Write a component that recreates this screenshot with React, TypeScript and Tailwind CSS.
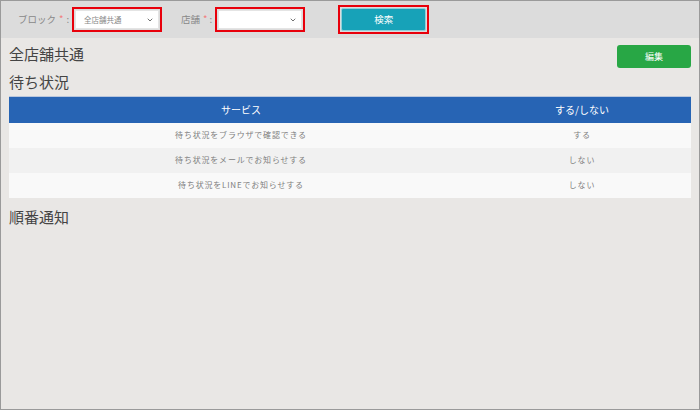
import { ChevronDown } from "lucide-react";

type Row = {
  service: string;
  value: string;
};

const rows: Row[] = [
  { service: "待ち状況をブラウザで確認できる", value: "する" },
  { service: "待ち状況をメールでお知らせする", value: "しない" },
  { service: "待ち状況をLINEでお知らせする", value: "しない" },
];

const font = { fontFamily: '"Noto Sans CJK JP", "Noto Sans", sans-serif' };

function FakeSelect({ text }: { text?: string }) {
  return (
    <div className="border-2 border-[#e8000b] p-px w-[90px] h-[25px] flex shrink-0">
      <div className="flex-1 bg-white border border-[#e4e4e4] flex items-center justify-between pl-[8px] pr-[4px]">
        <span className="text-[7.5px] text-[#888]">{text ?? ""}</span>
        <ChevronDown className="w-[8px] h-[8px] text-[#555]" strokeWidth={2.5} />
      </div>
    </div>
  );
}

export default function App() {
  return (
    <div
      className="w-[700px] h-[410px] border border-[#9a9a9a] bg-[#e9e7e5] flex flex-col"
      style={font}
    >
      {/* 検索バー */}
      <div className="h-[37px] bg-[#dcdcdc] flex items-center pl-[17px] shrink-0">
        <span className="text-[9.5px] text-[#888] w-[39px]">ブロック</span>
        <span className="text-[9.5px] text-[#f37a7a] ml-[2px]">*</span>
        <span className="text-[9.5px] text-[#888] ml-[3px] mr-[3px]">:</span>
        <FakeSelect text="全店舗共通" />
        <span className="text-[9.5px] text-[#888] ml-[19px] w-[20px]">店舗</span>
        <span className="text-[9.5px] text-[#f37a7a] ml-[2px]">*</span>
        <span className="text-[9.5px] text-[#888] ml-[2px] mr-[3px]">:</span>
        <FakeSelect />
        <div className="ml-[33px] border-2 border-[#e8000b] p-px w-[91px] h-[29px] flex shrink-0">
          <button className="flex-1 bg-[#17a2b8] border border-[#8fd0da] rounded-[2px] text-white text-[9.5px]">
            検索
          </button>
        </div>
      </div>

      <div className="px-[8px] pt-[5px]">
        <div className="flex items-start justify-between">
          <h2 className="text-[15px] text-[#444] leading-[20px] mt-[1px]">全店舗共通</h2>
          <button className="mt-[2px] w-[74px] h-[23px] bg-[#28a745] rounded-[3px] text-white text-[9px]">
            編集
          </button>
        </div>

        <h2 className="text-[15px] text-[#444] leading-[20px] mt-[4px]">待ち状況</h2>

        {/* テーブル */}
        <table className="w-full mt-[4px] border-collapse">
          <thead>
            <tr className="bg-[#2764b4] text-white text-[10px] h-[26px]">
              <th className="font-normal w-[464px] border-t border-[#b9c6dc]">サービス</th>
              <th className="font-normal border-t border-[#b9c6dc]">する/しない</th>
            </tr>
          </thead>
          <tbody>
            {rows.map((r, idx) => (
              <tr
                key={idx}
                className={`${idx % 2 === 1 ? "bg-[#f1f1f1]" : "bg-[#f9f9f9]"} h-[25px] text-[8px] text-[#808080] tracking-[0.8px] text-center`}
              >
                <td>{r.service}</td>
                <td>{r.value}</td>
              </tr>
            ))}
          </tbody>
        </table>

        <h2 className="text-[15px] text-[#444] leading-[20px] mt-[9px]">順番通知</h2>
      </div>
    </div>
  );
}
